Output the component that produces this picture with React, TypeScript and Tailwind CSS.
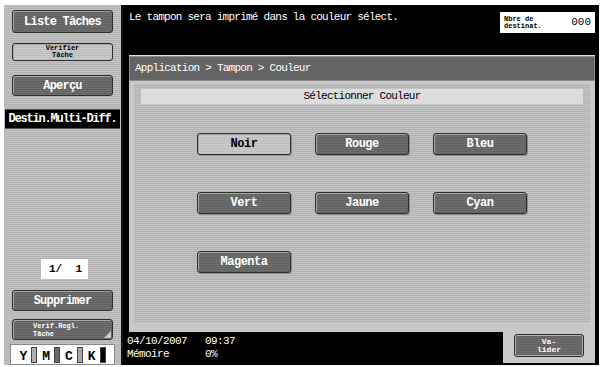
import type { ReactNode } from 'react'

const stripeLight =
  'bg-[repeating-linear-gradient(180deg,#c2c2c2_0px,#c2c2c2_1px,#b4b4b4_1px,#b4b4b4_2px)]'
const stripeDark =
  'bg-[repeating-linear-gradient(180deg,#6e6e6e_0px,#6e6e6e_1px,#626262_1px,#626262_2px)]'
const stripePale =
  'bg-[repeating-linear-gradient(180deg,#cacaca_0px,#cacaca_1px,#bebebe_1px,#bebebe_2px)]'

function KeyButton({ label, light = false }: { label: string; light?: boolean }) {
  return (
    <div
      className={`h-[22px] w-[94px] flex items-center justify-center rounded-[3px] border border-[#2e2e2e] shadow-[inset_1px_1px_0_#a8a8a8,1px_1px_0_#8a8a8a] text-[12px] font-bold tracking-[-0.5px] ${
        light ? `${stripePale} text-black` : `${stripeDark} text-white`
      }`}
    >
      {label}
    </div>
  )
}

function SideButton({ children, light = false, corner = false, className = '' }: { children: ReactNode; light?: boolean; corner?: boolean; className?: string }) {
  return (
    <div
      className={`relative mx-[8px] flex items-center justify-center rounded-[3px] border border-[#2e2e2e] shadow-[inset_1px_1px_0_#a8a8a8] ${
        light ? `${stripePale} text-black` : `${stripeDark} text-white`
      } ${className}`}
    >
      {children}
      {corner && (
        <div className="absolute bottom-[1px] right-[1px] w-0 h-0 border-l-[7px] border-l-transparent border-b-[7px] border-b-[#c8c8c8]" />
      )}
    </div>
  )
}

function Toner({ letter, color }: { letter: string; color: string }) {
  return (
    <div className="flex items-end gap-[4px]">
      <span className="text-[13px] font-bold leading-none text-black">{letter}</span>
      <div className={`w-[6px] h-[16px] border border-[#444] ${color}`} />
    </div>
  )
}

export default function App() {
  return (
    <div className="w-[601px] h-[367px] bg-white flex pt-[5px] pb-[2px] pl-[4px] pr-[2px] font-['Liberation_Mono',monospace] overflow-hidden">
      {/* left column */}
      <div className={`w-[119px] flex flex-col border-r-[2px] border-r-[#111] ${stripeLight}`}>
        <SideButton className="mt-[5px] h-[23px] text-[12px] font-bold tracking-[-0.8px]">Liste Tâches</SideButton>
        <SideButton light className="mt-[10px] h-[18px] text-[7px] font-bold leading-[7px] flex-col">
          <span>Verifier</span>
          <span>Tâche</span>
        </SideButton>
        <SideButton className="mt-[14px] h-[21px] text-[12px] font-bold tracking-[-0.8px]">Aperçu</SideButton>
        <div className="mt-[13px] mx-[1px] h-[20px] bg-black text-white text-[12px] font-bold tracking-[-1.2px] flex items-center justify-center border-y border-[#555]">
          Destin.Multi-Diff.
        </div>
        <div className="flex-1" />
        <div className="ml-[37px] w-[47px] h-[20px] bg-white text-black text-[11px] font-bold flex items-center justify-end pr-[6px]">
          1/&nbsp;&nbsp;1
        </div>
        <SideButton className="mt-[11px] h-[21px] text-[12px] font-bold tracking-[-0.8px]">Supprimer</SideButton>
        <SideButton corner className="mt-[8px] h-[21px] text-[7px] font-bold leading-[8px] flex-col !items-start pl-[20px]">
          <span>Verif.Regl.</span>
          <span>Tâche</span>
        </SideButton>
        <div className="mt-[4px] mx-[6px] h-[21px] bg-white flex items-center justify-around px-[6px] border border-[#888]">
          <Toner letter="Y" color="bg-[#b0b0b0]" />
          <Toner letter="M" color="bg-[#6a6a6a]" />
          <Toner letter="C" color="bg-[#a8a8a8]" />
          <Toner letter="K" color="bg-black" />
        </div>
      </div>

      {/* main screen */}
      <div className="flex-1 bg-black flex flex-col pl-[6px] pr-[4px]">
        <div className="h-[50px] flex items-start justify-between pt-[4px]">
          <div className="text-white text-[11px] tracking-[-0.75px]">
            Le tampon sera imprimé dans la couleur sélect.
          </div>
          <div className="mt-[3px] w-[95px] h-[21px] bg-white flex items-center justify-between px-[4px]">
            <div className="flex flex-col text-[7px] font-bold leading-[7px] text-black">
              <span>Nbre de</span>
              <span>destinat.</span>
            </div>
            <span className="text-[11px] text-black">000</span>
          </div>
        </div>

        {/* panel */}
        <div className="h-[277px] bg-[#c8c8c8] border-t border-[#ddd] flex flex-col">
          <div className="h-[25px] bg-[#646464] border border-[#8a8a8a] flex items-center pl-[5px] text-white text-[11px] tracking-[-0.75px]">
            Application &gt; Tampon &gt; Couleur
          </div>
          <div className={`mx-[5px] mt-[3px] h-[239px] ${stripeLight} flex flex-col px-[7px] pt-[5px]`}>
            <div className="h-[15px] bg-[#dcdcdc] flex items-center justify-center text-black text-[11px] tracking-[-0.75px]">
              Sélectionner Couleur
            </div>
            <div className="mt-[29px] grid grid-cols-[94px_94px_94px] gap-x-[24px] gap-y-[37px] justify-center">
              <KeyButton label="Noir" light />
              <KeyButton label="Rouge" />
              <KeyButton label="Bleu" />
              <KeyButton label="Vert" />
              <KeyButton label="Jaune" />
              <KeyButton label="Cyan" />
              <KeyButton label="Magenta" />
            </div>
          </div>
        </div>

        {/* footer */}
        <div className="flex-1 flex">
          <div className="flex-1 pt-[3px] -ml-[2px] text-white text-[11px] leading-[13px] tracking-[-0.6px]">
            <div>04/10/2007&nbsp;&nbsp;&nbsp;09:37</div>
            <div>Mémoire&nbsp;&nbsp;&nbsp;&nbsp;&nbsp;&nbsp;0%</div>
          </div>
          <div className="w-[92px] h-[31px] bg-[#c8c8c8] flex items-start justify-center pt-[2px]">
            <div className={`w-[70px] h-[23px] rounded-[3px] border border-[#2e2e2e] shadow-[inset_0_0_0_1px_#b0b0b0] ${stripeDark} flex flex-col items-center justify-center text-white text-[8px] font-bold leading-[8px]`}>
              <span>Va-</span>
              <span>lider</span>
            </div>
          </div>
        </div>
      </div>
    </div>
  )
}
